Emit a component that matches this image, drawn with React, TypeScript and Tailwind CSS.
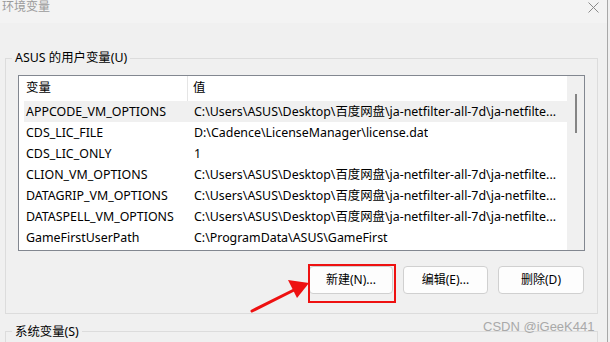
import React from "react";

const FONT = { fontFamily: '"Noto Sans", "Noto Sans CJK SC", sans-serif' };

const longPath = "C:\\Users\\ASUS\\Desktop\\百度网盘\\ja-netfilter-all-7d\\ja-netfilte...";

const rows: [string, string][] = [
  ["APPCODE_VM_OPTIONS", longPath],
  ["CDS_LIC_FILE", "D:\\Cadence\\LicenseManager\\license.dat"],
  ["CDS_LIC_ONLY", "1"],
  ["CLION_VM_OPTIONS", longPath],
  ["DATAGRIP_VM_OPTIONS", longPath],
  ["DATASPELL_VM_OPTIONS", longPath],
  ["GameFirstUserPath", "C:\\ProgramData\\ASUS\\GameFirst"],
];

function Btn({ label, w }: { label: string; w: string }) {
  return (
    <div
      className={`${w} h-[28px] rounded-[4px] border border-[#d0d0d0] bg-[#fdfdfd] flex items-center justify-center text-[12px] text-black`}
    >
      {label}
    </div>
  );
}

export default function App() {
  return (
    <div
      className="relative w-[610px] h-[342px] overflow-hidden bg-[#f0f0f0] flex"
      style={FONT}
    >
      <div className="w-[608px] flex flex-col border-r border-[#a8a8a8]">
        {/* title bar */}
        <div className="h-[23px] bg-[#f3f3f3] flex items-start justify-between pl-[2px] pr-[8px] shrink-0">
          <span className="text-[12px] leading-[14px] text-[#9b9b9b] mt-0">环境变量</span>
          <svg width="11" height="11" viewBox="0 0 11 11" className="mt-[2px]">
            <path d="M0.5 0.5 L10.5 10.5 M10.5 0.5 L0.5 10.5" stroke="#8a8a8a" strokeWidth="1" />
          </svg>
        </div>

        {/* user group */}
        <div className="relative ml-[5px] mt-[35px] w-[593px] h-[256px] border border-[#dcdcdc] shrink-0">
          <span className="absolute left-[6px] top-[-9px] bg-[#f0f0f0] px-[3px] text-[12.4px] leading-[16px] text-black">
            ASUS 的用户变量(U)
          </span>
          <div className="ml-[12px] mt-[16px] w-[567px] h-[176px] border border-[#828790] bg-white flex">
            <div className="flex-1 flex flex-col pl-[5px] overflow-hidden">
              <div className="h-[25px] flex items-stretch text-[12.4px] text-black shrink-0">
                <div className="w-[164px] border-r border-[#e5e5e5] pl-[2px] flex items-center">变量</div>
                <div className="pl-[5px] flex items-center">值</div>
              </div>
              {rows.map(([k, v], i) => (
                <div
                  key={k}
                  className={`h-[21px] flex items-center text-[12.4px] text-black shrink-0 pt-[1px] ${i === 0 ? "bg-[#f0f0f0]" : ""}`}
                >
                  <div className="w-[164px] pl-[2px] whitespace-nowrap">{k}</div>
                  <div className="pl-[6px] whitespace-nowrap overflow-hidden">{v}</div>
                </div>
              ))}
            </div>
            <div className="w-[17px] bg-[#f0f0f0] flex justify-center pt-[18px] shrink-0">
              <div className="w-[2px] h-[39px] bg-[#858585]" />
            </div>
          </div>
          <div className="flex justify-end gap-[10px] pr-[13px] mt-[15px]">
            <Btn label="新建(N)..." w="w-[84px]" />
            <Btn label="编辑(E)..." w="w-[85px]" />
            <Btn label="删除(D)" w="w-[86px]" />
          </div>
        </div>

        {/* system group */}
        <div className="relative ml-[5px] mt-[17px] w-[593px] h-[40px] border border-[#dcdcdc] shrink-0">
          <span className="absolute left-[6px] top-[-8px] bg-[#f0f0f0] px-[3px] text-[12.4px] leading-[16px] text-black">
            系统变量(S)
          </span>
        </div>
      </div>

      {/* annotation: red box */}
      <div className="absolute left-[308px] top-[264px] w-[88px] h-[39px] border-2 border-[#ee1111]" />
      {/* annotation: arrow */}
      <svg className="absolute left-0 top-0" width="610" height="342" viewBox="0 0 610 342">
        <line x1="252" y1="311" x2="296" y2="289" stroke="#ee1111" strokeWidth="3" strokeLinecap="round" />
        <polygon points="309,283 288,280 297,298" fill="#ee1111" />
      </svg>

      {/* watermark */}
      <span
        className="absolute left-[483px] top-[318px] text-[13px] leading-[18px] text-[#a9a9a9]"
        style={{ fontFamily: '"Liberation Sans", Arial, sans-serif' }}
      >
        CSDN @iGeeK441
      </span>
    </div>
  );
}
